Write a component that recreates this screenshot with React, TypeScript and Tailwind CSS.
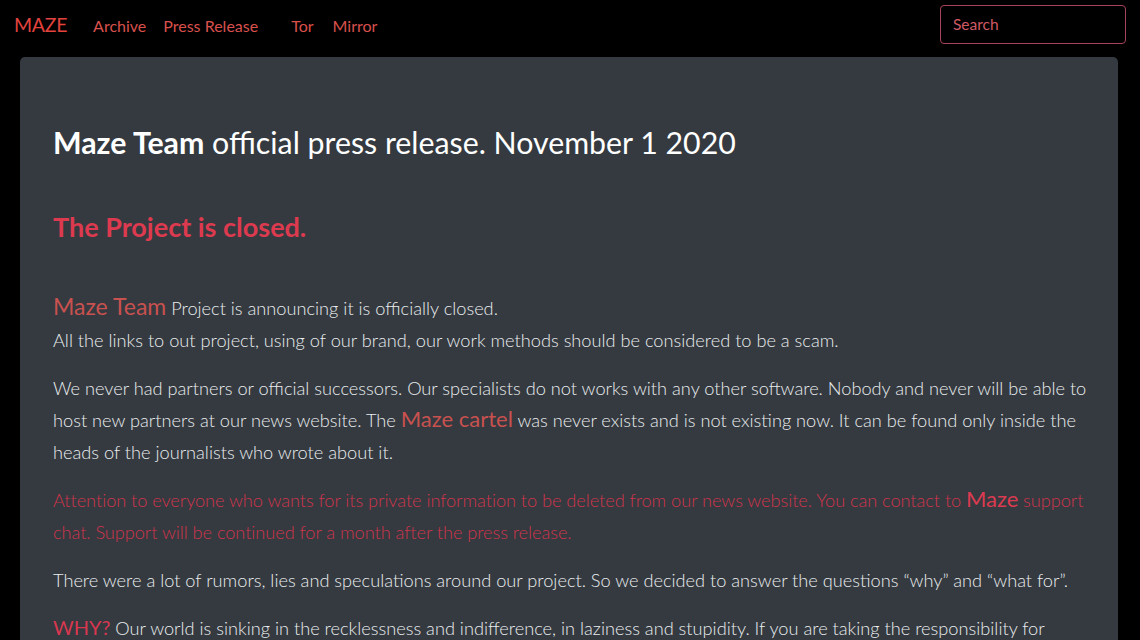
const font = "font-['Lato',sans-serif]";

function Navbar() {
  return (
    <nav className="flex items-center h-[50px] bg-black pl-[14px] pr-[14px]">
      <a className="text-[19.5px] text-[#e2433d] tracking-[-0.3px] leading-none">MAZE</a>
      <div className="flex items-center text-[16px] text-[#d8504c] leading-none ml-[26px] mt-[2px]">
        <a>Archive</a>
        <a className="ml-[17px]">Press Release</a>
        <a className="ml-[33px]">Tor</a>
        <a className="ml-[19px]">Mirror</a>
      </div>
      <div className="ml-auto -mt-[2px]">
        <input
          placeholder="Search"
          className="w-[186px] h-[39px] rounded-[4px] border border-[#a8435a] bg-black px-[12px] text-[15.5px] text-[#d05c68] placeholder:text-[#cf5a66] outline-none"
        />
      </div>
    </nav>
  );
}

function Red({ children, size = "text-[22.5px]" }: { children: React.ReactNode; size?: string }) {
  return <span className={`${size} leading-none text-[#c9514f] font-normal`}>{children}</span>;
}

export default function App() {
  return (
    <div className={`${font} bg-black min-h-screen overflow-hidden`}>
      <Navbar />
      <main className="mt-[7px] ml-[20px] mr-[22px] rounded-[5px] bg-[#343a40] px-[33px] pt-[65px] pb-10">
        <h1 className="text-[30.3px] leading-[40px] text-white font-normal">
          <b className="font-bold">Maze Team</b> official press release. November 1 2020
        </h1>
        <h2 className="mt-[49px] text-[27px] leading-[32px] font-bold text-[#dd3a4f]">
          The Project is closed.
        </h2>
        <div className="mt-[49px] text-[18.2px] leading-[32px] font-light text-[#eaecee] whitespace-nowrap">
          <p className="mb-4">
            <Red size="text-[23px]">Maze Team</Red> Project is announcing it is officially closed.
            <br />
            All the links to out project, using of our brand, our work methods should be considered to be a scam.
          </p>
          <p className="mb-4">
            We never had partners or official successors. Our specialists do not works with any other software. Nobody and never will be able to
            <br />
            host new partners at our news website. The <Red size="text-[22px]">Maze cartel</Red> was never exists and is not existing now. It can be found only inside the
            <br />
            heads of the journalists who wrote about it.
          </p>
          <p className="mb-4 text-[#d0344c] tracking-[-0.05px]">
            Attention to everyone who wants for its private information to be deleted from our news website. You can contact to{" "}
            <span className="text-[22px] leading-none text-[#dc3a50] font-normal">Maze</span> support
            <br />
            chat. Support will be continued for a month after the press release.
          </p>
          <p className="mb-4">
            There were a lot of rumors, lies and speculations around our project. So we decided to answer the questions “why” and “what for”.
          </p>
          <p className="mb-4">
            <span className="text-[20px] leading-none text-[#d8374f] font-normal">WHY?</span> Our world is sinking in the recklessness and indifference, in laziness and stupidity. If you are taking the responsibility for
          </p>
        </div>
      </main>
    </div>
  );
}
